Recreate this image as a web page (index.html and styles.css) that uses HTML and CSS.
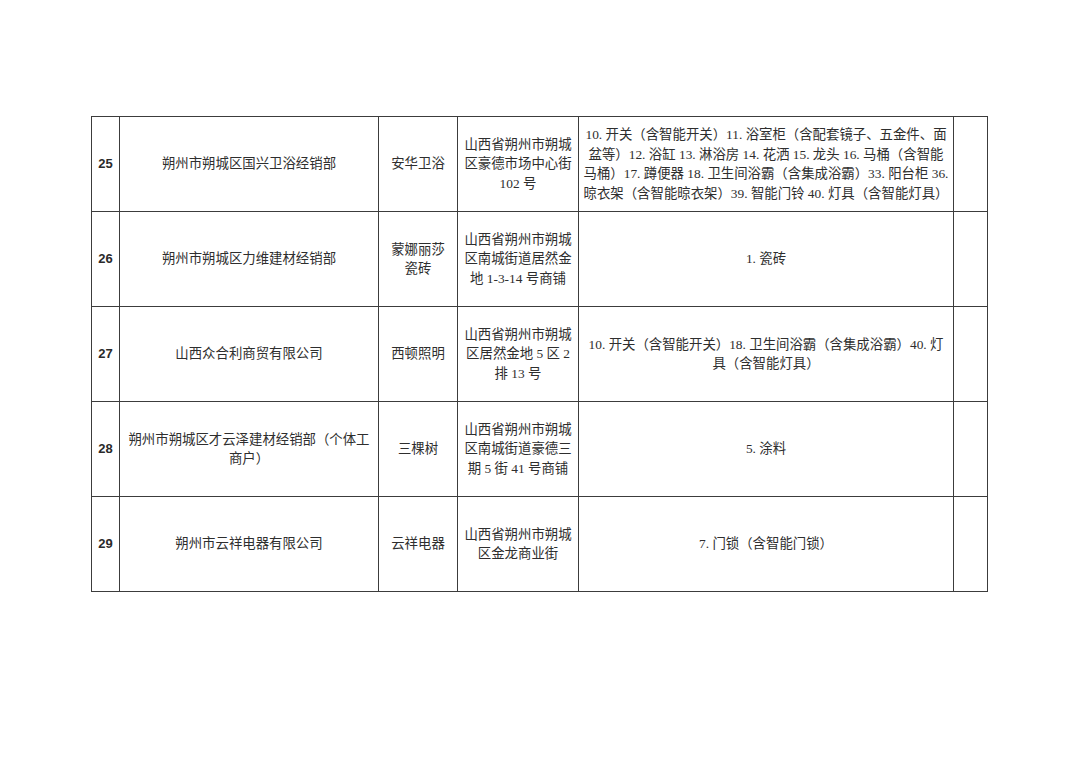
FILE: index.html
```html
<!DOCTYPE html>
<html lang="zh-CN">
<head>
<meta charset="utf-8">
<link rel="stylesheet" href="styles.css">
</head>
<body>
<div class="page">
<table class="list">
<colgroup>
<col class="c-no"><col class="c-name"><col class="c-brand"><col class="c-addr"><col class="c-prod"><col class="c-note">
</colgroup>
<tbody>
<tr>
<td class="no">25</td>
<td>朔州市朔城区国兴卫浴经销部</td>
<td>安华卫浴</td>
<td>山西省朔州市朔城<br>区豪德市场中心街<br>102 号</td>
<td class="prod">10. 开关（含智能开关）11. 浴室柜（含配套镜子、五金件、面<br>盆等）12. 浴缸 13. 淋浴房 14. 花洒 15. 龙头 16. 马桶（含智能<br>马桶）17. 蹲便器 18. 卫生间浴霸（含集成浴霸）33. 阳台柜 36.<br>晾衣架（含智能晾衣架）39. 智能门铃 40. 灯具（含智能灯具）</td>
<td></td>
</tr>
<tr>
<td class="no">26</td>
<td>朔州市朔城区力维建材经销部</td>
<td>蒙娜丽莎<br>瓷砖</td>
<td>山西省朔州市朔城<br>区南城街道居然金<br>地 1-3-14 号商铺</td>
<td>1. 瓷砖</td>
<td></td>
</tr>
<tr>
<td class="no">27</td>
<td>山西众合利商贸有限公司</td>
<td>西顿照明</td>
<td>山西省朔州市朔城<br>区居然金地 5 区 2<br>排 13 号</td>
<td>10. 开关（含智能开关）18. 卫生间浴霸（含集成浴霸）40. 灯<br>具（含智能灯具）</td>
<td></td>
</tr>
<tr>
<td class="no">28</td>
<td>朔州市朔城区才云泽建材经销部（个体工<br>商户）</td>
<td>三棵树</td>
<td>山西省朔州市朔城<br>区南城街道豪德三<br>期 5 街 41 号商铺</td>
<td>5. 涂料</td>
<td></td>
</tr>
<tr>
<td class="no">29</td>
<td>朔州市云祥电器有限公司</td>
<td>云祥电器</td>
<td>山西省朔州市朔城<br>区金龙商业街</td>
<td>7. 门锁（含智能门锁）</td>
<td></td>
</tr>
</tbody>
</table>
</div>
</body>
</html>
```
FILE: styles.css
```css
html, body {
  margin: 0;
  padding: 0;
  background: #ffffff;
}
.page {
  padding: 116px 0 0 91px;
}
.list {
  border-collapse: collapse;
  table-layout: fixed;
  width: 897px;
  font-family: "Liberation Serif", "Noto Sans CJK SC", serif;
  font-size: 13.4px;
  line-height: 19.5px;
  color: #2e2e2e;
}
.c-no { width: 28px; }
.c-name { width: 259px; }
.c-brand { width: 79px; }
.c-addr { width: 121px; }
.c-prod { width: 375px; }
.c-note { width: 34px; }
.list td {
  border: 1px solid #3c3c3c;
  height: 94px;
  padding: 0;
  text-align: center;
  vertical-align: middle;
  white-space: nowrap;
}
.list td.no {
  font-family: "Liberation Sans", "Noto Sans CJK SC", sans-serif;
  font-size: 13px;
  font-weight: bold;
  color: #2a2a2a;
}
```
